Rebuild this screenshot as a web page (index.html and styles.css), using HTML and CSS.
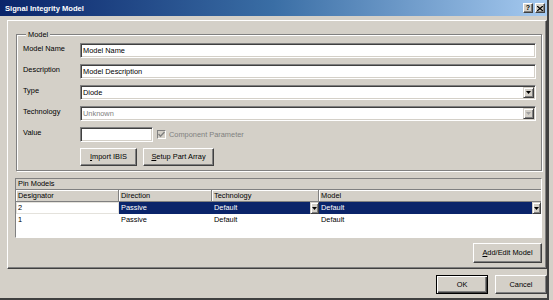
FILE: index.html
```html
<!DOCTYPE html>
<html>
<head>
<meta charset="utf-8">
<link rel="stylesheet" href="styles.css">
</head>
<body>
<div class="window">
  <div class="titlebar">
    <span class="title">Signal Integrity Model</span>
    <div class="tbtns">
      <span class="tbtn">?</span>
      <span class="tbtn">
        <svg width="6" height="5" viewBox="0 0 6 5"><path d="M0 0L6 5M6 0L0 5" stroke="#000" stroke-width="1.3"/></svg>
      </span>
    </div>
  </div>
  <div class="client">
    <div class="panel">
      <div class="group">
        <span class="legend">Model</span>
        <div class="form">
          <label class="lbl">Model Name</label>
          <div class="edit">Model Name</div>
          <label class="lbl">Description</label>
          <div class="edit">Model Description</div>
          <label class="lbl">Type</label>
          <div class="edit combo"><span class="val">Diode</span><span class="ddbtn"><svg width="5" height="3" viewBox="0 0 5 3"><polygon points="0,0 5,0 2.5,3" fill="#000"/></svg></span></div>
          <label class="lbl">Technology</label>
          <div class="edit combo disabled"><span class="val">Unknown</span><span class="ddbtn"><svg width="5" height="3" viewBox="0 0 5 3"><polygon points="0,0 5,0 2.5,3" fill="#a0a0a0"/></svg></span></div>
          <label class="lbl">Value</label>
          <div class="valrow">
            <div class="edit short"></div>
            <span class="check"><svg width="7" height="7" viewBox="0 0 7 7"><path d="M0.5 3 L2.5 5.2 L6.5 1" fill="none" stroke="#808080" stroke-width="1.4"/></svg></span>
            <span class="graytxt">Component Parameter</span>
          </div>
          <div class="btnrow">
            <button class="btn b-import"><u>I</u>mport IBIS</button>
            <button class="btn b-setup"><u>S</u>etup Part Array</button>
          </div>
        </div>
      </div>
      <div class="pins">
        <div class="band">Pin Models</div>
        <div class="grid">
          <div class="hcell">Designator</div>
          <div class="hcell">Direction</div>
          <div class="hcell">Technology</div>
          <div class="hcell last">Model</div>

          <div class="cell focus">2</div>
          <div class="cell sel">Passive</div>
          <div class="cell sel dd"><span class="val">Default</span><span class="ddbtn small"><svg width="5" height="3" viewBox="0 0 5 3"><polygon points="0,0 5,0 2.5,3" fill="#000"/></svg></span></div>
          <div class="cell sel dd"><span class="val">Default</span><span class="ddbtn small"><svg width="5" height="3" viewBox="0 0 5 3"><polygon points="0,0 5,0 2.5,3" fill="#000"/></svg></span></div>

          <div class="cell">1</div>
          <div class="cell">Passive</div>
          <div class="cell">Default</div>
          <div class="cell">Default</div>
        </div>
      </div>
      <button class="btn b-add"><u>A</u>dd/Edit Model</button>
    </div>
    <div class="footer">
      <button class="btn b-foot default">OK</button>
      <button class="btn b-foot">Cancel</button>
    </div>
  </div>
</div>
</body>
</html>
```
FILE: styles.css
```css
* { box-sizing: border-box; }

body {
  margin: 0;
  width: 553px;
  height: 300px;
  overflow: hidden;
  background: #d4d0c8;
  font-family: "Liberation Sans", Arial, sans-serif;
  font-size: 7.4px;
  color: #000;
}

.window {
  width: 549px;
  height: 300px;
  border-right: 2px solid #404040;
  border-bottom: 2px solid #404040;
  display: flex;
  flex-direction: column;
}

.titlebar {
  height: 16px;
  flex: none;
  background: linear-gradient(to right, #0a246a 0%, #3a6ea5 50%, #a6caf0 100%);
  display: flex;
  align-items: center;
  justify-content: space-between;
  padding: 0 2px 0 5px;
}

.title {
  color: #fff;
  font-weight: bold;
  font-size: 7.6px;
}

.tbtns {
  display: flex;
  gap: 2px;
}

.tbtn {
  width: 10px;
  height: 10px;
  background: #d4d0c8;
  border: 1px solid;
  border-color: #fff #404040 #404040 #fff;
  box-shadow: inset -1px -1px #808080;
  display: flex;
  align-items: center;
  justify-content: center;
  font-weight: bold;
  font-size: 7px;
  line-height: 8px;
}

.client {
  flex: 1;
  display: flex;
  flex-direction: column;
}

.panel {
  margin: 4px 0 0 7px;
  width: 540px;
  height: 249px;
  flex: none;
  border: 1px solid;
  border-color: #fff #404040 #404040 #fff;
  box-shadow: inset -1px -1px #808080;
  display: flex;
  flex-direction: column;
}

.group {
  margin: 13px 0 0 8px;
  width: 526px;
  height: 137px;
  border: 1px solid #808080;
  box-shadow: inset 1px 1px #fff, 1px 1px #fff;
  padding: 0 5px 0 6px;
  display: flex;
  flex-direction: column;
}

.legend {
  align-self: flex-start;
  height: 9px;
  line-height: 9px;
  margin: -5px 0 0 3px;
  padding: 0 2px;
  background: #d4d0c8;
}

.form {
  margin-top: 4px;
  display: grid;
  grid-template-columns: 57px 1fr;
  row-gap: 6px;
  align-items: start;
}

.lbl {
  line-height: 11px;
}

.edit {
  height: 15px;
  background: #fff;
  border: 1px solid;
  border-color: #808080 #fff #fff #808080;
  box-shadow: inset 1px 1px #404040, inset -1px -1px #d4d0c8;
  padding: 1px 1px 1px 2px;
  line-height: 11px;
  white-space: nowrap;
}

.combo {
  display: flex;
  align-items: stretch;
}

.combo .val {
  flex: 1;
}

.disabled .val {
  color: #808080;
}

.ddbtn {
  width: 11px;
  flex: none;
  background: #d4d0c8;
  border: 1px solid;
  border-color: #d4d0c8 #404040 #404040 #d4d0c8;
  box-shadow: inset 1px 1px #fff, inset -1px -1px #808080;
  display: flex;
  align-items: center;
  justify-content: center;
}

.ddbtn svg {
  display: block;
}

.ddbtn.small {
  width: 9px;
}

.valrow {
  display: flex;
  align-items: center;
  height: 15px;
}

.edit.short {
  width: 73px;
}

.check {
  width: 9px;
  height: 9px;
  margin-left: 4px;
  border: 1px solid;
  border-color: #808080 #fff #fff #808080;
  background: #d4d0c8;
  display: flex;
  align-items: center;
  justify-content: center;
}

.check svg {
  display: block;
}

.graytxt {
  color: #808080;
  margin-left: 3px;
}

.btnrow {
  grid-column: 2;
  display: flex;
  gap: 6px;
}

.btn {
  font: inherit;
  color: #000;
  background: #d4d0c8;
  border: 1px solid;
  border-color: #fff #404040 #404040 #fff;
  box-shadow: inset -1px -1px #808080;
  padding: 0;
  margin: 0;
  text-align: center;
  line-height: 10px;
}

.b-import { width: 57px; height: 18px; }
.b-setup { width: 71px; height: 18px; }

.pins {
  margin: 7px 0 0 7px;
  width: 527px;
  height: 60px;
  border: 1px solid;
  border-color: #808080 #fff #fff #808080;
  background: #fff;
  display: flex;
  flex-direction: column;
}

.band {
  height: 11px;
  line-height: 10px;
  padding-left: 2px;
  background: #d4d0c8;
  border-bottom: 1px solid #808080;
}

.grid {
  display: grid;
  grid-template-columns: 103px 93px 107px 1fr;
  grid-auto-rows: 12px;
}

.hcell {
  background: #d4d0c8;
  border-right: 1px solid #808080;
  border-bottom: 1px solid #808080;
  box-shadow: inset 1px 1px #fff;
  padding-left: 2px;
  line-height: 11px;
}

.hcell.last {
  border-right: none;
}

.cell {
  padding-left: 2px;
  line-height: 12px;
  white-space: nowrap;
}

.cell.focus {
  box-shadow: inset 0 0 0 1px #e4e2dc;
}

.cell.sel {
  background: #0a246a;
  color: #fff;
}

.cell.dd {
  display: flex;
  padding-right: 0;
}

.cell.dd .val {
  flex: 1;
}

.b-add {
  align-self: flex-end;
  margin: 5px 4px 0 0;
  width: 69px;
  height: 20px;
}

.footer {
  display: flex;
  justify-content: flex-end;
  gap: 7px;
  margin-top: 6px;
}

.b-foot {
  width: 52px;
  height: 19px;
}

.btn.default {
  border: 1px solid #000;
  box-shadow: inset 1px 1px #fff, inset -1px -1px #404040, inset -2px -2px #808080;
}
```
